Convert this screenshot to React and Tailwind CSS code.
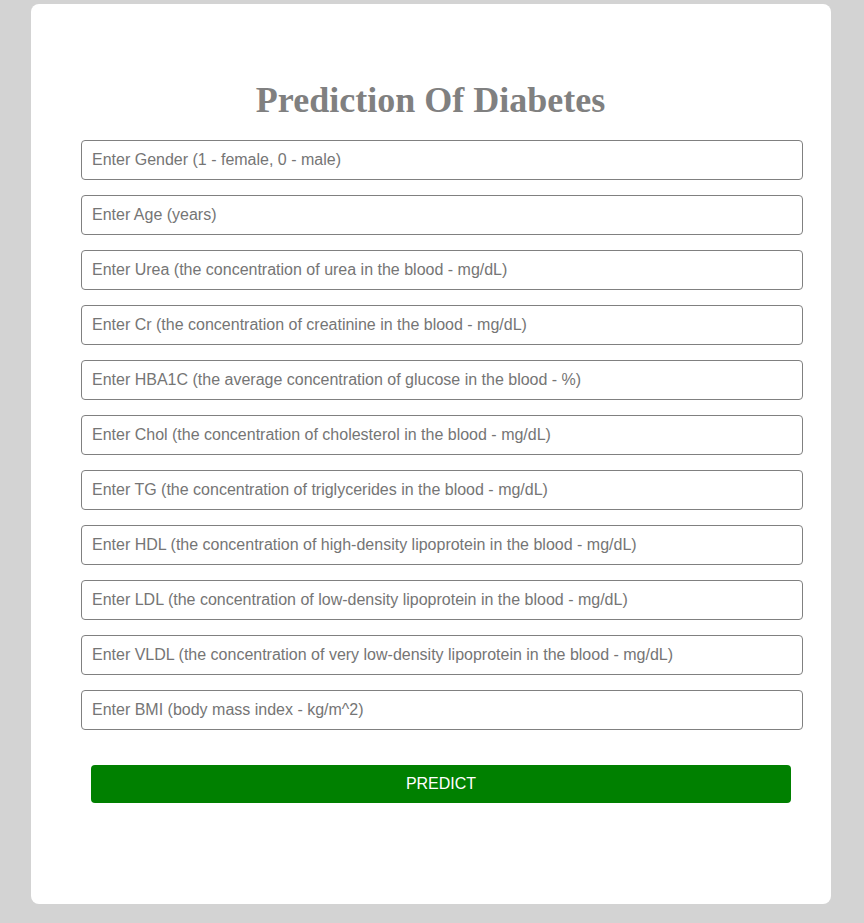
export default function App() {
  const fields = [
    "Enter Gender (1 - female, 0 - male)",
    "Enter Age (years)",
    "Enter Urea (the concentration of urea in the blood - mg/dL)",
    "Enter Cr (the concentration of creatinine in the blood - mg/dL)",
    "Enter HBA1C (the average concentration of glucose in the blood - %)",
    "Enter Chol (the concentration of cholesterol in the blood - mg/dL)",
    "Enter TG (the concentration of triglycerides in the blood - mg/dL)",
    "Enter HDL (the concentration of high-density lipoprotein in the blood - mg/dL)",
    "Enter LDL (the concentration of low-density lipoprotein in the blood - mg/dL)",
    "Enter VLDL (the concentration of very low-density lipoprotein in the blood - mg/dL)",
    "Enter BMI (body mass index - kg/m^2)",
  ];
  return (
    <div className="min-h-screen bg-[#d3d3d3] pt-[4px] pb-[19px]" style={{ fontFamily: '"Liberation Sans", Arial, sans-serif' }}>
      <div className="ml-[31px] w-[800px] h-[900px] bg-white rounded-[8px] pt-[75px] px-[50px]">
        <h1
          className="text-[36px] leading-[42px] font-bold text-[#808080] text-center -ml-[51px] -mr-[50px] mb-[19px]"
          style={{ fontFamily: '"Liberation Serif", "Times New Roman", serif' }}
        >
          Prediction Of Diabetes
        </h1>
        <div className="flex flex-col gap-[15px]">
          {fields.map((f) => (
            <input
              key={f}
              type="text"
              placeholder={f}
              className="w-[722px] h-[40px] border border-[#808080] rounded-[4px] px-[10px] text-[16px] text-[#333] placeholder:text-[#757575] outline-none bg-white"
            />
          ))}
        </div>
        <button className="mt-[35px] ml-[10px] w-[700px] h-[38px] bg-[#008000] text-white text-[16px] rounded-[4px] uppercase">
          Predict
        </button>
      </div>
    </div>
  );
}
